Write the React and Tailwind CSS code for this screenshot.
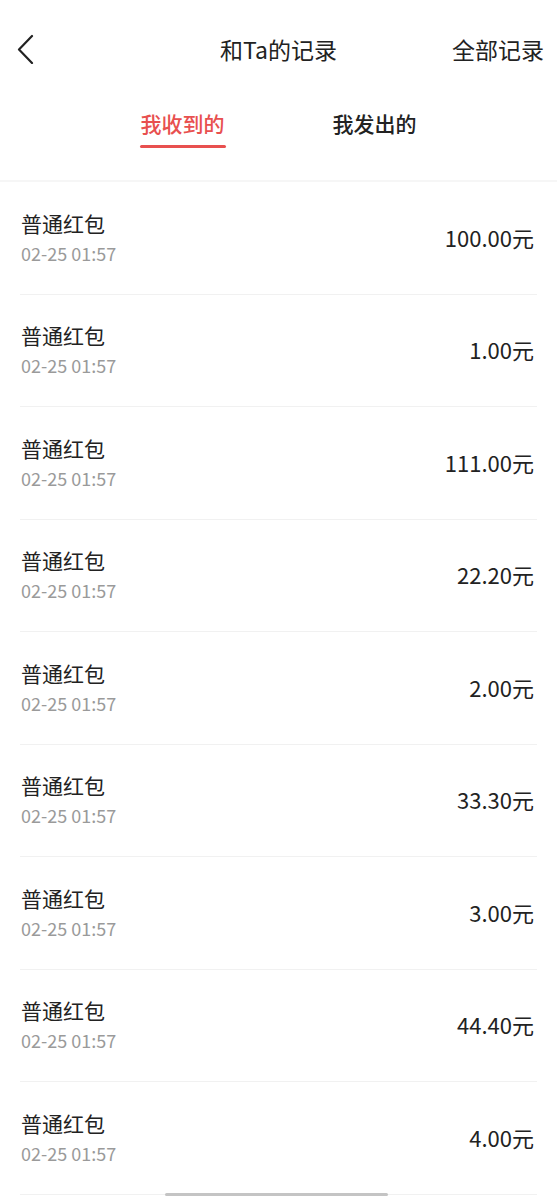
import React, { useState } from 'react';

const records = [
  { amount: '100.00' },
  { amount: '1.00' },
  { amount: '111.00' },
  { amount: '22.20' },
  { amount: '2.00' },
  { amount: '33.30' },
  { amount: '3.00' },
  { amount: '44.40' },
  { amount: '4.00' },
  { amount: '5.00' },
];

const font = { fontFamily: '"Noto Sans CJK SC", "Noto Sans", sans-serif' };

const App = () => {
  const [tab, setTab] = useState(0);

  return (
    <div className="relative h-[1200px] w-full overflow-hidden bg-white text-[#222]" style={font}>
      {/* Header */}
      <div className="flex h-[98px] items-center">
        <div className="w-[110px] pl-[16px]">
          <svg width="20" height="30" viewBox="0 0 20 30" fill="none">
            <path d="M16 2 L3 15.5 L16 29" stroke="#222" strokeWidth="2.2" strokeLinecap="round" strokeLinejoin="round" />
          </svg>
        </div>
        <div className="flex-1 text-center text-[23px] leading-[30px]">和Ta的记录</div>
        <div className="w-[110px] pr-[13px] text-right text-[23px] leading-[30px]">全部记录</div>
      </div>

      {/* Tabs */}
      <div className="flex h-[82px] justify-center gap-[106px]">
        {['我收到的', '我发出的'].map((label, i) => (
          <button key={label} onClick={() => setTab(i)} className="flex flex-col items-center pt-[11px]">
            <span className={`text-[21px] font-medium leading-[28px] ${tab === i ? 'text-[#e8504f]' : 'text-[#222]'}`}>
              {label}
            </span>
            <span className={`mt-[8px] h-[3px] w-[86px] rounded-full ${tab === i ? 'bg-[#e8504f]' : 'bg-transparent'}`} />
          </button>
        ))}
      </div>
      <div className="h-[2px] bg-[#f6f6f6]" />

      {/* List */}
      <div>
        {records.map((r, i) => (
          <div key={i} className="mx-5 flex h-[112.5px] items-center justify-between border-b border-[#f1f1f1]">
            <div className="pl-[1px]">
              <div className="text-[21px] leading-[30px]">普通红包</div>
              <div className="text-[18px] leading-[30px] text-[#9a9a9a]">02-25 01:57</div>
            </div>
            <div className="pb-[2px] pr-[3px] text-[22px] leading-[30px]">{r.amount}元</div>
          </div>
        ))}
      </div>

      {/* Scroll indicator */}
      <div className="absolute left-[165px] top-[1193px] h-[3px] w-[223px] rounded-full bg-[#c4c4c4]" />
    </div>
  );
};

export default App;
